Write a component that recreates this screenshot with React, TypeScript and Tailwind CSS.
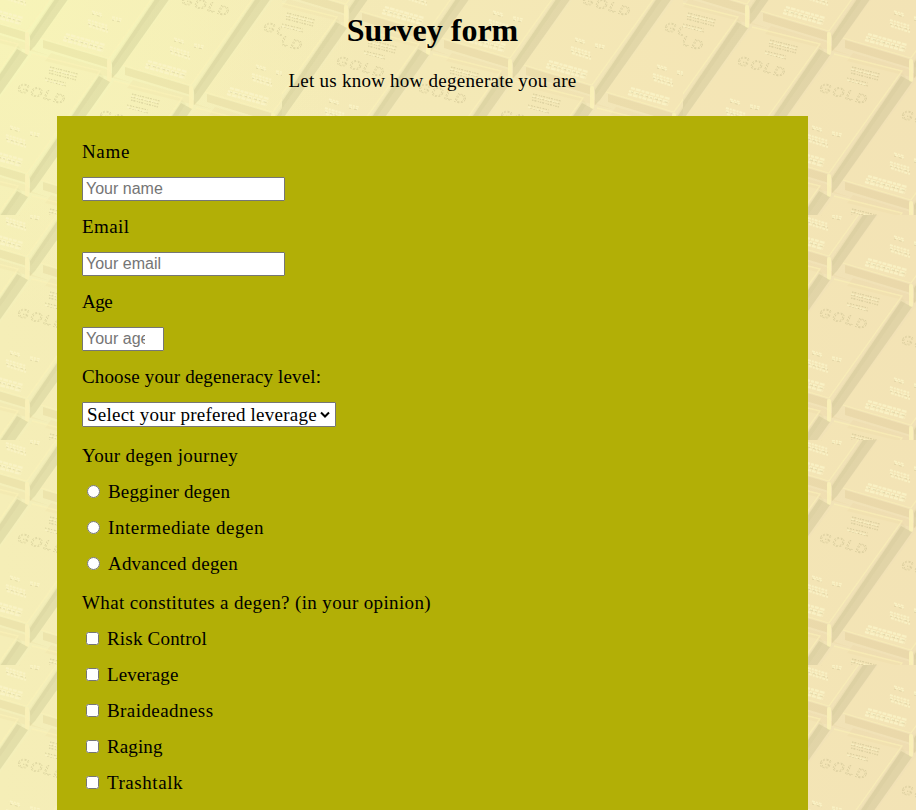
import React from "react";

const serif = "font-['Liberation_Serif',serif] text-[19px] leading-[24px] text-black whitespace-nowrap";

const cells: [number, number][] = [];
for (let j = -1; j <= 3; j++) {
  for (let i = -2; i <= 7; i++) {
    const x = 64 + 82 * i - 82 * j;
    const y = 17 + 27 * i + 115 * j;
    if (x > -100 && x < 490 && y > -40 && y < 350) cells.push([x, y]);
  }
}

function GoldBar({ x, y }: { x: number; y: number }) {
  return (
    <g transform={`translate(${x} ${y})`}>
      <path d="M3 2L72-100L83-94L8 12L3 17Z" fill="#aaa573" opacity=".22" />
      <path d="M2 1L73-103L77-99L4 7Z" fill="#aaa573" opacity=".07" />
      <path d="M-66-21L-2-2L0 7L-66-13Z" fill="#c5a763" opacity=".15" />
      <path d="M-58-8L0 9L6 16L24 22L-64 0Z" fill="#d5b878" opacity=".08" />
      <path d="M5-122L73-105L0-3L-68-23Z" fill="#f9edb0" opacity=".2" />
      <path d="M5-122L73-105L0-3L-68-23" fill="none" stroke="#fbf2b8" strokeWidth="1.3" opacity=".55" />
      <path d="M0 0V19" stroke="#faf1b8" strokeWidth="4" strokeLinecap="round" opacity=".9" />
      <g fill="none" stroke="#a8a070" opacity=".34">
        <path d="M23-109l28 7M22-106l28 7M22-103l27 7" strokeWidth="1.1" strokeDasharray="1.5 1 2 1.5 1 1" />
        <path d="M18-98l21 5M20-95l19 5" strokeWidth="1" strokeDasharray="1.5 1.5 2 1" />
      </g>
      <g fill="none" stroke="#fbf5c8" opacity=".8">
        <path d="M22-107l28 7M18-96l20 5" strokeWidth="1.1" strokeDasharray="3 2 2 1" />
        <path d="M-17-50l10 3M3-44l10 2M-16-48l9 3M3-42l9 2" strokeWidth="1.5" strokeDasharray="3 1 2 1" />
        <path d="M-21-41l20 6M-21-38l20 6M-20-35l19 6" strokeWidth="2" strokeDasharray="3 1 2 1" />
        <path d="M-43-27l39 11M-45-24l40 11M-46-21l40 11" strokeWidth="2.3" strokeDasharray="4 1 5 1 3 1" />
      </g>
      <path d="M-17-47l10 3M3-41l9 2M-21-37l20 6M-43-23l38 11" fill="none" stroke="#a8a070" strokeWidth="1" strokeDasharray="2 3 3 2" opacity=".26" />
      <text transform="matrix(.96 .27 -.4 .8 -11 -85)" fill="none" stroke="#a8a070" strokeWidth=".7" strokeDasharray="2 1.5" opacity=".36" className="font-['Liberation_Sans',sans-serif] text-[15px] tracking-[2px]">GOLD</text>
    </g>
  );
}

function Backdrop() {
  return (
    <svg aria-hidden="true" className="absolute inset-0 h-full w-full" viewBox="0 0 916 810">
      <defs>
        <filter id="soft" x="0" y="0" width="401" height="225" filterUnits="userSpaceOnUse" colorInterpolationFilters="sRGB">
          <feGaussianBlur stdDeviation=".6" />
        </filter>
        <pattern id="bars" x="-119" y="-10" width="401" height="225" patternUnits="userSpaceOnUse">
          <g filter="url(#soft)">
            {cells.map(([x, y]) => <GoldBar key={`${x}:${y}`} x={x} y={y} />)}
          </g>
        </pattern>
        <linearGradient id="wash" x1="0" y1="0" x2="1" y2="0">
          <stop offset="0" stopColor="#f4efb9" />
          <stop offset=".5" stopColor="#f3e8b8" />
          <stop offset="1" stopColor="#f1e1b6" />
        </linearGradient>
        <radialGradient id="corner" cx="0" cy="0" r=".4">
          <stop offset="0" stopColor="#f6f6ba" />
          <stop offset="1" stopColor="#f6f6ba" stopOpacity="0" />
        </radialGradient>
      </defs>
      <rect width="916" height="810" fill="url(#wash)" />
      <rect width="916" height="810" fill="url(#corner)" />
      <rect width="916" height="810" fill="url(#bars)" />
    </svg>
  );
}

const field = "block h-6 rounded-[1px] border border-[#767676] bg-white pl-[3px] font-['Liberation_Sans',sans-serif] text-[16px] leading-[20px] placeholder:text-[#757575] placeholder:opacity-100 outline-none";

const fields = [
  { label: "Name", hint: "Your name", track: "tracking-[0.65px]", box: "w-[203px]" },
  { label: "Email", hint: "Your email", track: "tracking-[0.4px]", box: "w-[203px]" },
  { label: "Age", hint: "Your age", track: "tracking-[-0.5px]", box: "w-[82px] pr-[18px]" },
];

const levels = [
  { label: "Begginer degen", track: "tracking-[0.17px]" },
  { label: "Intermediate degen", track: "tracking-[0.55px]" },
  { label: "Advanced degen", track: "tracking-[0.2px]" },
];

const traits = [
  { label: "Risk Control", track: "tracking-[0.2px]" },
  { label: "Leverage", track: "tracking-[0.1px]" },
  { label: "Braideadness", track: "tracking-[0.43px]" },
  { label: "Raging", track: "tracking-[0.1px]" },
  { label: "Trashtalk", track: "tracking-[0.55px]" },
];

export default function App() {
  return (
    <div className="relative h-[810px] w-[916px] overflow-hidden">
      <Backdrop />
      <main className="relative ml-[57px] w-[751px]">
        <header className="flex h-[116px] flex-col items-center pt-3 text-center">
          <h1 className="font-['Liberation_Serif',serif] text-[32px] font-bold leading-[36px] text-black">Survey form</h1>
          <p className={`${serif} mt-[21px] tracking-[0.25px]`}>Let us know how degenerate you are</p>
        </header>
        <form className="h-[720px] bg-[#b2af06] pl-[25px] pt-6">
          {fields.map((f) => (
            <label key={f.label} className="block h-[75px]">
              <span className={`${serif} ${f.track} block`}>{f.label}</span>
              <input className={`${field} ${f.box} mt-[13px]`} placeholder={f.hint} />
            </label>
          ))}
          <div className="h-[79px]">
            <span className={`${serif} block tracking-[0.15px]`}>Choose your degeneracy level:</span>
            <button type="button" className="mt-[13px] flex h-[25px] w-[254px] items-center rounded-[1px] border border-[#767676] bg-white pl-1">
              <span className={`${serif} w-[233px] text-left tracking-[0.23px]`}>Select your prefered leverage</span>
              <svg width="10" height="8" viewBox="0 0 10 8" fill="none" stroke="#000" strokeWidth="2"><path d="M1 1.5L5 5.5L9 1.5" /></svg>
            </button>
          </div>
          <p className={`${serif} h-9 tracking-[0.34px]`}>Your degen journey</p>
          {levels.map((o) => (
            <label key={o.label} className="flex h-9 items-start pl-[5px]">
              <input type="radio" name="journey" className="mt-[5px] h-[13px] w-[13px]" />
              <span className={`${serif} ${o.track} ml-2`}>{o.label}</span>
            </label>
          ))}
          <p className={`${serif} mt-[3px] h-9 tracking-[0.36px]`}>What constitutes a degen? (in your opinion)</p>
          {traits.map((o) => (
            <label key={o.label} className="flex h-9 items-start pl-1">
              <input type="checkbox" className="mt-[5px] h-[13px] w-[13px]" />
              <span className={`${serif} ${o.track} ml-2`}>{o.label}</span>
            </label>
          ))}
        </form>
      </main>
    </div>
  );
}
